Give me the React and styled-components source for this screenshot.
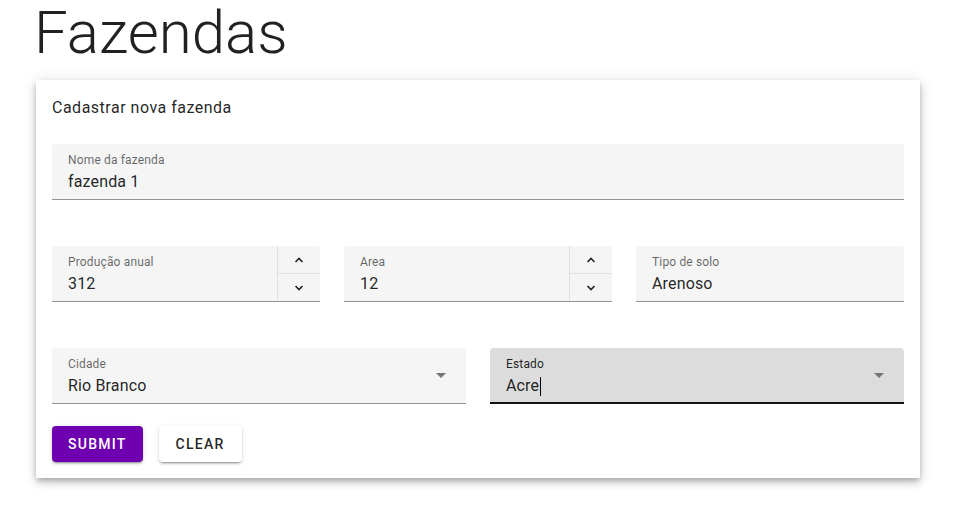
import React from 'react';
import styled, { createGlobalStyle } from 'styled-components';

const GlobalStyle = createGlobalStyle`
  html, body {
    margin: 0;
    padding: 0;
    background: #fff;
    font-family: Roboto, "Noto Sans", Arial, sans-serif;
    color: rgba(0, 0, 0, 0.87);
  }
`;

const Page = styled.div`
  padding: 3px 33px 30px 36px;
`;

const Title = styled.h1`
  margin: 0 0 0 -2px;
  font-size: 60px;
  line-height: 60px;
  font-weight: 300;
  color: rgba(0, 0, 0, 0.87);
`;

const Card = styled.div`
  margin-top: 17px;
  background: #fff;
  padding: 16px;
  box-shadow: 0 3px 5px -1px rgba(0, 0, 0, 0.2), 0 5px 8px 0 rgba(0, 0, 0, 0.14),
    0 1px 14px 0 rgba(0, 0, 0, 0.12);
`;

const CardTitle = styled.div`
  font-size: 16px;
  line-height: 24px;
  letter-spacing: 0.5px;
  margin-bottom: 24px;
`;

const Row = styled.div`
  display: grid;
  grid-template-columns: repeat(${(p) => p.cols}, 1fr);
  gap: 24px;
  margin-bottom: ${(p) => p.gap}px;
`;

const Field = styled.div`
  position: relative;
  height: 56px;
  background: ${(p) => (p.focused ? '#dcdcdc' : '#f5f5f5')};
  border-radius: 4px 4px 0 0;
  border-bottom: ${(p) => (p.focused ? '2px solid #111' : '1px solid #949494')};
  box-sizing: border-box;
  display: flex;
`;

const FieldBody = styled.div`
  flex: 1;
  padding: 9px 16px 0;
  display: flex;
  flex-direction: column;
`;

const Label = styled.span`
  font-size: 12px;
  line-height: 14px;
  letter-spacing: 0.15px;
  color: ${(p) => (p.focused ? 'rgba(0,0,0,0.87)' : 'rgba(0,0,0,0.6)')};
  margin-bottom: 4px;
`;

const Value = styled.span`
  font-size: 16px;
  line-height: 22px;
  letter-spacing: 0.15px;
  color: rgba(0, 0, 0, 0.87);
  display: flex;
  align-items: center;
`;

const Caret = styled.span`
  display: inline-block;
  width: 1px;
  height: 19px;
  background: #000;
  margin-left: 1px;
`;

const Spinner = styled.div`
  width: 42px;
  border-left: 1px solid #e0e0e0;
  display: flex;
  flex-direction: column;
`;

const SpinButton = styled.div`
  flex: 1;
  display: flex;
  align-items: center;
  justify-content: center;
  & + & {
    border-top: 1px solid #e0e0e0;
  }
`;

const Arrow = styled.div`
  width: 0;
  height: 0;
  border-left: 5px solid transparent;
  border-right: 5px solid transparent;
  border-top: 5px solid #757575;
  align-self: center;
  margin: 0 20px 0 0;
`;

const Actions = styled.div`
  display: flex;
  gap: 16px;
`;

const Button = styled.button`
  height: 36px;
  padding: 0 ${(p) => (p.primary ? 16 : 17)}px;
  border: none;
  border-radius: 4px;
  font-family: Roboto, Arial, sans-serif;
  font-size: 14px;
  font-weight: 500;
  letter-spacing: 1.25px;
  text-transform: uppercase;
  background: ${(p) => (p.primary ? '#6f00b0' : '#fff')};
  color: ${(p) => (p.primary ? '#fff' : 'rgba(0,0,0,0.87)')};
  box-shadow: 0 3px 1px -2px rgba(0, 0, 0, 0.2), 0 2px 2px 0 rgba(0, 0, 0, 0.14),
    0 1px 5px 0 rgba(0, 0, 0, 0.12);
`;

const Chevron = ({ up }) => (
  <svg width="10" height="6" viewBox="0 0 10 6">
    <path
      d={up ? 'M1.5 5 L5 1.5 L8.5 5' : 'M1.5 1 L5 4.5 L8.5 1'}
      fill="none"
      stroke="#222"
      strokeWidth="1.6"
    />
  </svg>
);

const TextField = ({ label, value, number, select, focused }) => (
  <Field focused={focused}>
    <FieldBody>
      <Label focused={focused}>{label}</Label>
      <Value>
        {value}
        {focused && <Caret />}
      </Value>
    </FieldBody>
    {number && (
      <Spinner>
        <SpinButton>
          <Chevron up />
        </SpinButton>
        <SpinButton>
          <Chevron />
        </SpinButton>
      </Spinner>
    )}
    {select && <Arrow />}
  </Field>
);

export default function App() {
  return (
    <Page>
      <GlobalStyle />
      <Title>Fazendas</Title>
      <Card>
        <CardTitle>Cadastrar nova fazenda</CardTitle>
        <Row cols={1} gap={46}>
          <TextField label="Nome da fazenda" value="fazenda 1" />
        </Row>
        <Row cols={3} gap={46}>
          <TextField label="Produção anual" value="312" number />
          <TextField label="Area" value="12" number />
          <TextField label="Tipo de solo" value="Arenoso" />
        </Row>
        <Row cols={2} gap={22}>
          <TextField label="Cidade" value="Rio Branco" select />
          <TextField label="Estado" value="Acre" select focused />
        </Row>
        <Actions>
          <Button primary>Submit</Button>
          <Button>Clear</Button>
        </Actions>
      </Card>
    </Page>
  );
}
